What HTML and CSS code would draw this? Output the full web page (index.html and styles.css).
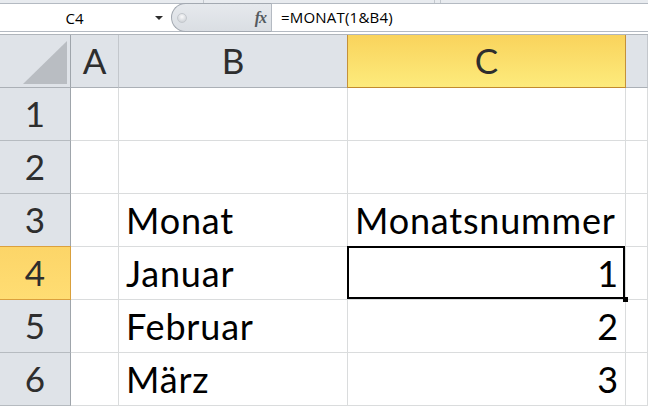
FILE: index.html
```html
<!DOCTYPE html>
<html lang="de">
<head>
<meta charset="utf-8">
<title>MONAT</title>
<link rel="stylesheet" href="styles.css">
</head>
<body>
<div class="strip"><span class="seg1"></span><span class="seg2"></span><span class="seg3"></span></div>
<div class="fbar">
  <div class="namebox"><span class="ref">C4</span><span class="caret"></span></div>
  <div class="fxzone"><span class="knob"></span><span class="fx">fx</span></div>
  <div class="formula">=MONAT(1&amp;B4)</div>
</div>
<div class="gap"></div>
<div class="sheet">
  <div class="cell hd corner"><svg class="tri" width="70" height="52" viewBox="0 0 70 52"><polygon points="23,49 67,49 67,6" fill="#b9bdc2"/></svg></div>
  <div class="cell hd">A</div>
  <div class="cell hd">B</div>
  <div class="cell hd sel-col">C</div>
  <div class="cell hd"></div>

  <div class="cell hd rh">1</div>
  <div class="cell"></div><div class="cell"></div><div class="cell"></div><div class="cell"></div>

  <div class="cell hd rh">2</div>
  <div class="cell"></div><div class="cell"></div><div class="cell"></div><div class="cell"></div>

  <div class="cell hd rh">3</div>
  <div class="cell"></div><div class="cell">Monat</div><div class="cell">Monatsnummer</div><div class="cell"></div>

  <div class="cell hd rh sel-row">4</div>
  <div class="cell"></div><div class="cell">Januar</div><div class="cell num active">1<span class="outline"></span><span class="handle"></span></div><div class="cell"></div>

  <div class="cell hd rh">5</div>
  <div class="cell"></div><div class="cell">Februar</div><div class="cell num">2</div><div class="cell"></div>

  <div class="cell hd rh">6</div>
  <div class="cell"></div><div class="cell">März</div><div class="cell num">3</div><div class="cell"></div>
</div>
</body>
</html>
```

FILE: styles.css
```css
html, body {
  margin: 0;
  padding: 0;
}
body {
  width: 648px;
  height: 406px;
  overflow: hidden;
  background: #ffffff;
  font-family: Lato, "Open Sans", sans-serif;
}

/* ribbon remnant strip */
.strip {
  height: 3px;
  display: flex;
  background: #e8ebef;
}
.strip span {
  box-sizing: border-box;
  border-right: 1px solid #c3c8ce;
}
.seg1 { width: 204px; }
.seg2 { width: 231px; }
.seg3 { width: 6px; }

/* formula bar */
.fbar {
  display: flex;
  height: 27px;
  border-top: 1px solid #b4bac2;
  border-bottom: 1px solid #b4bac2;
  background: #ffffff;
}
.namebox {
  width: 171px;
  display: flex;
  align-items: center;
  font-family: "Open Sans", sans-serif;
  font-size: 15px;
  color: #000;
}
.ref {
  width: 149px;
  text-align: center;
}
.caret {
  margin-left: 6px;
  width: 0;
  height: 0;
  border-left: 4px solid transparent;
  border-right: 4px solid transparent;
  border-top: 4px solid #2d2d2d;
}
.fxzone {
  box-sizing: border-box;
  width: 101px;
  margin: -1px 0;
  display: flex;
  align-items: center;
  border: 1px solid #a3a9b1;
  border-right-color: #b4bac2;
  border-radius: 15px 0 0 15px;
  background: linear-gradient(#e6e9ed, #dadee3);
}
.knob {
  box-sizing: border-box;
  width: 10px;
  height: 10px;
  margin-left: 5px;
  border-radius: 50%;
  border: 1px solid #c4c8cd;
  background: radial-gradient(circle at 50% 35%, #fafafb 0, #d9dce0 60%, #c7cbd0 100%);
}
.fx {
  margin-left: auto;
  margin-right: 5px;
  font-family: "Liberation Serif", serif;
  font-style: italic;
  font-weight: bold;
  font-size: 16px;
  color: #555a60;
  letter-spacing: -1px;
}
.formula {
  flex: 1;
  padding-left: 9px;
  font-family: "Open Sans", sans-serif;
  font-size: 15px;
  letter-spacing: 0.2px;
  line-height: 27px;
  color: #000;
}
.gap {
  height: 2px;
}

/* sheet grid */
.sheet {
  display: grid;
  grid-template-columns: 71px 48px 229px 278px 22px;
  grid-auto-rows: 53px;
  border-top: 1px solid #b0b5bb;
}
.cell {
  box-sizing: border-box;
  position: relative;
  display: flex;
  align-items: flex-end;
  padding: 0 7px 8px;
  border-right: 1px solid #dadcdd;
  border-bottom: 1px solid #dadcdd;
  font-size: 36px;
  letter-spacing: 0.8px;
  line-height: 1;
  color: #000;
  white-space: nowrap;
}
.num {
  justify-content: flex-end;
  padding-right: 6px;
}
.hd {
  justify-content: center;
  padding: 0 0 9px;
  font-size: 35px;
  letter-spacing: 0;
  background: #dfe3e8;
  color: #2e2e2e;
  border-right-color: #c3c7cc;
  border-bottom-color: #abb0b6;
}
.rh {
  border-right-color: #9fa5ab;
  border-bottom-color: #b6bbc0;
}
.corner {
  border-right-color: #9fa5ab;
}
.tri {
  position: absolute;
  left: 0;
  top: 0;
}
.sel-col {
  background: linear-gradient(#f9d35c, #fdeb7c);
  border-right-color: #c4913a;
  border-bottom-color: #c28a2e;
  box-shadow: -1px 0 0 #c4913a;
}
.sel-row {
  background: linear-gradient(#fcd568, #ffdd73);
  border-right-color: #d9a03c;
  border-bottom-color: #dba03d;
  box-shadow: 0 -1px 0 #dba03d;
}
.active {
  z-index: 2;
}
.outline {
  position: absolute;
  left: -1px;
  top: -1px;
  right: 0;
  bottom: 0;
  border: 2px solid #000;
}
.handle {
  position: absolute;
  right: -3px;
  bottom: -3px;
  width: 5px;
  height: 5px;
  background: #000;
}
```
